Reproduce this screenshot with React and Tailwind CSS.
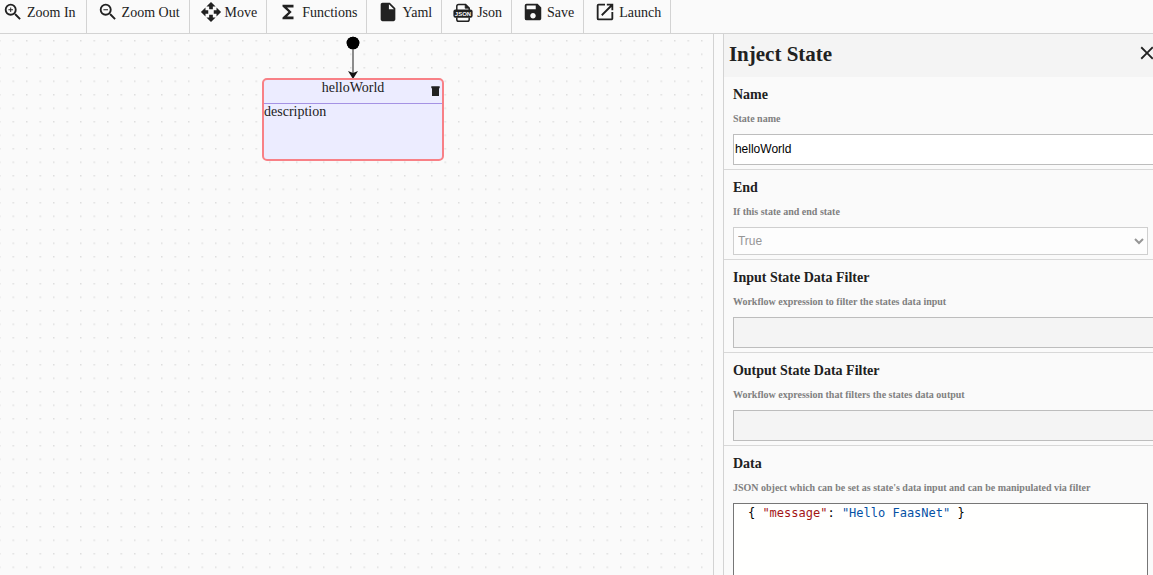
import React from "react";
import {
  MdZoomIn,
  MdZoomOut,
  MdOpenWith,
  MdFunctions,
  MdInsertDriveFile,
  MdSave,
  MdLaunch,
  MdClose,
} from "react-icons/md";

function JsonIcon() {
  return (
    <svg viewBox="0 0 22 22" className="h-[22px] w-[22px] shrink-0" aria-hidden="true">
      <path
        d="M4.8 9V5.2Q4.8 3.4 6.6 3.4H13.6L17.2 7V9"
        fill="none"
        stroke="#212121"
        strokeWidth="1.5"
      />
      <path d="M13.2 3.4V7.2H17.2Z" fill="#212121" stroke="#212121" strokeWidth="0.8" />
      <path
        d="M4.8 16.5V18.4Q4.8 20.2 6.6 20.2H15.4Q17.2 20.2 17.2 18.4V16.5"
        fill="none"
        stroke="#212121"
        strokeWidth="1.5"
      />
      <rect x="1.4" y="8.6" width="19.2" height="8.2" rx="2" fill="#212121" />
      <text
        x="11"
        y="15"
        textAnchor="middle"
        fill="#fafafa"
        fontSize="6"
        fontWeight="700"
        fontFamily="Liberation Sans, sans-serif"
      >
        JSON
      </text>
    </svg>
  );
}

const tools = [
  { label: "Zoom In", Icon: MdZoomIn },
  { label: "Zoom Out", Icon: MdZoomOut },
  { label: "Move", Icon: MdOpenWith },
  { label: "Functions", Icon: MdFunctions },
  { label: "Yaml", Icon: MdInsertDriveFile },
  { label: "Json", Icon: JsonIcon },
  { label: "Save", Icon: MdSave },
  { label: "Launch", Icon: MdLaunch },
];

function Toolbar() {
  return (
    <header className="flex shrink-0 border-b border-[#d3d3d3]">
      {tools.map(({ label, Icon }) => (
        <button
          key={label}
          type="button"
          className="flex items-center gap-[3px] border-r border-[#d3d3d3] pt-px pr-[9px] pb-2.5 pl-2.5 text-[14px] first:pr-2.5 first:pl-0.5"
        >
          <Icon className="h-[22px] w-[22px] shrink-0" />
          <span className="pt-0.5 leading-5">{label}</span>
        </button>
      ))}
    </header>
  );
}

function Canvas() {
  return (
    <main className="relative min-w-0 flex-1 overflow-hidden border-r border-[#d3d3d3]">
      <svg className="absolute inset-0 h-full w-full" aria-hidden="true">
        <defs>
          <pattern id="dots" x="12.5" y="6" width="13.5" height="13.5" patternUnits="userSpaceOnUse">
            <rect width="1.5" height="1.5" fill="#dedede" />
          </pattern>
        </defs>
        <rect width="100%" height="100%" fill="url(#dots)" />
        <circle cx="353" cy="9" r="6.3" fill="#000" />
        <path d="M353 9V43" stroke="#8c8c8c" strokeWidth="2" fill="none" />
        <circle cx="353" cy="9" r="6.3" fill="#000" />
        <path d="M348 37L353 39L358 37L353 45Z" fill="#111" />
      </svg>
      <section className="absolute top-11 left-[262px] flex h-[83px] w-[182px] flex-col rounded-[5px] border-2 border-[#f88086] bg-[#ececff] text-[14px] leading-4">
        <div className="flex h-6 justify-center border-b border-[#a592e4]">
          <span>helloWorld</span>
        </div>
        <p>description</p>
        <button type="button" aria-label="Delete state" className="absolute top-1.5 right-0.5">
          <svg viewBox="0 0 9 11" className="h-[11px] w-[9px]" aria-hidden="true">
            <path d="M0.3 0.3H8.7V2.2H0.3ZM1 2H8V10H1Z" fill="#212121" />
          </svg>
        </button>
      </section>
    </main>
  );
}

function Field({ id, title, hint, children }) {
  return (
    <section className="border-b border-[#d8d8d8] pt-2.5 pr-[5px] pb-1 pl-[9px]">
      <label id={id + "-label"} htmlFor={id} className="block text-[14px] leading-4 font-bold">
        {title}
      </label>
      <p className="mt-2.5 mb-[9px] text-[10px] leading-3 font-bold text-[#808080]">{hint}</p>
      {children}
    </section>
  );
}

const inputClass =
  "block box-content h-7 w-full border border-[#bdbdbd] pr-2 pb-px pl-px font-['Liberation_Sans',Arial,sans-serif] text-[12px] text-black";

function Inspector() {
  return (
    <aside className="ml-[9px] flex w-[37.3%] shrink-0 flex-col overflow-hidden border-l border-[#d3d3d3]">
      <div className="flex h-[43px] shrink-0 items-start justify-between bg-[#f4f4f4] pt-2 pl-[5px]">
        <h2 className="text-[21px] leading-6 font-bold">Inject State</h2>
        <button type="button" aria-label="Close" className="-mr-[5px]">
          <MdClose className="h-[22px] w-[22px]" />
        </button>
      </div>
      <Field id="name" title="Name" hint="State name">
        <input id="name" type="text" defaultValue="helloWorld" className={inputClass + " bg-white"} />
      </Field>
      <Field id="end" title="End" hint="If this state and end state">
        <select
          id="end"
          disabled
          defaultValue="true"
          className="block h-7 w-full border border-[#bdbdbd] bg-white font-['Liberation_Sans',Arial,sans-serif] text-[12px] text-[#6d6d6d] opacity-70"
        >
          <option value="true">True</option>
          <option value="false">False</option>
        </select>
      </Field>
      <Field id="input-filter" title="Input State Data Filter" hint="Workflow expression to filter the states data input">
        <input id="input-filter" type="text" disabled className={inputClass + " bg-[#f4f4f4]"} />
      </Field>
      <Field id="output-filter" title="Output State Data Filter" hint="Workflow expression that filters the states data output">
        <input id="output-filter" type="text" disabled className={inputClass + " bg-[#f4f4f4]"} />
      </Field>
      <Field
        id="data"
        title="Data"
        hint="JSON object which can be set as state's data input and can be manipulated via filter"
      >
        <div
          id="data"
          role="textbox"
          aria-labelledby="data-label"
          aria-multiline="true"
          contentEditable
          suppressContentEditableWarning
          className="h-[200px] border border-[#767676] bg-[#fffffe] pl-3.5 font-['DejaVu_Sans_Mono',monospace] text-[12px] leading-[18px] whitespace-pre text-black outline-none"
        >
          {"{ "}
          <span className="text-[#a31515]">"message"</span>
          {": "}
          <span className="text-[#0451a5]">"Hello FaasNet"</span>
          {" }"}
        </div>
      </Field>
    </aside>
  );
}

export default function App() {
  return (
    <div className="flex h-screen flex-col overflow-hidden bg-[#fafafa] font-['Liberation_Serif','Times_New_Roman',serif] text-[#212121]">
      <Toolbar />
      <div className="flex min-h-0 flex-1">
        <Canvas />
        <Inspector />
      </div>
    </div>
  );
}
